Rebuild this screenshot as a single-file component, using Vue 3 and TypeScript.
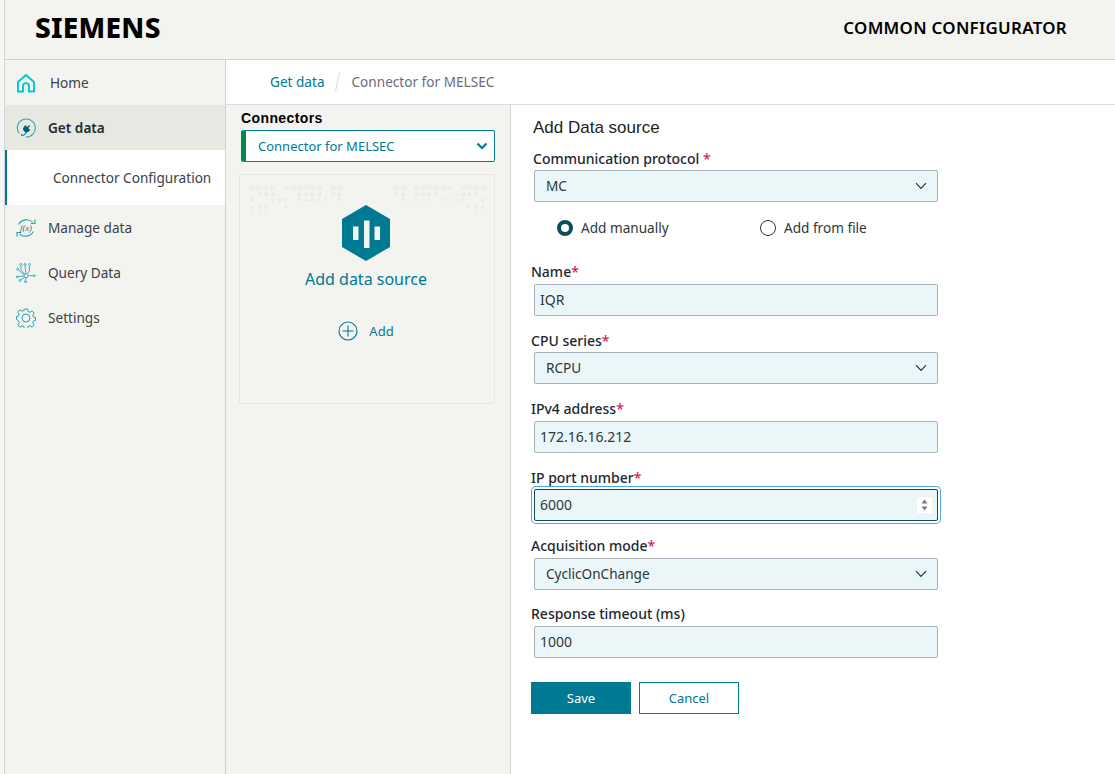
<script setup lang="ts">
const teal = '#007993'

const fields = [
  { label: 'Name', req: true, value: 'IQR', kind: 'input' },
  { label: 'CPU series', req: true, value: 'RCPU', kind: 'select' },
  { label: 'IPv4 address', req: true, value: '172.16.16.212', kind: 'input' },
  { label: 'IP port number', req: true, value: '6000', kind: 'number' },
  { label: 'Acquisition mode', req: true, value: 'CyclicOnChange', kind: 'select' },
  { label: 'Response timeout (ms)', req: false, value: '1000', kind: 'input' },
]

// faint circuit dots behind the card, [y, size, x positions]
const dotRows: Array<[number, number, number[]]> = [
  [12, 3, [12, 18, 25, 32, 46, 53, 59, 66, 72, 79, 93, 99, 156, 163, 176, 183, 189, 196, 203, 209, 223, 229, 236, 243]],
  [19, 2.5, [20, 26, 33, 59, 66, 72, 79, 93, 99, 156, 163, 176, 183, 189, 196, 223, 229, 236]],
  [25, 1.5, [12, 33, 40, 46, 59, 66, 72, 79, 86, 99, 163, 176, 189, 203, 216, 223, 243]],
  [32, 1.5, [12, 20, 26, 46, 229, 236, 243]],
  [39, 1, [12, 20, 26, 236, 243]],
]
</script>

<template>
  <div class="page">
    <div class="strip"></div>
    <div class="shell">
      <header class="topbar">
        <span class="logo">SIEMENS</span>
        <span class="app-name">COMMON CONFIGURATOR</span>
      </header>

      <div class="body">
        <nav class="sidebar">
          <div class="nav-item home">
            <svg class="nav-icon" viewBox="0 0 20 20" fill="none" stroke="#00c7d4" stroke-width="1.9">
              <path d="M2 9 10 2l8 7v9.500h-5v-5.400a3 3 0 0 0-6 0v5.400H2z" stroke-linejoin="miter" />
            </svg>
            <span>Home</span>
          </div>
          <div class="nav-item active">
            <svg class="nav-icon" viewBox="0 0 20 20" fill="none" stroke="#2fa6b8" stroke-width="1.1">
              <path d="M3.200 15.500A9 9 0 1 1 10 19" />
              <path d="M5 16.500c1.500 1.500 3 .8 4-.3l1.400-2.400" stroke="#00788f" />
              <path d="m9.200 7 2 2 2-2 1 1-2 2 2 2-1.800 1.800a3 3 0 0 1-4-.3l-.6-.6a3 3 0 0 1 0-4z" fill="#00607a" stroke="none" />
            </svg>
            <span>Get data</span>
          </div>
          <div class="nav-sub">Connector Configuration</div>
          <div class="nav-item">
            <svg class="nav-icon" viewBox="0 0 20 20" fill="none" stroke="#1ba3b8" stroke-width="1.1">
              <path d="M2.600 6.500A9 9 0 0 1 16.700 4.200" />
              <path d="M19 1.500v4h-4" />
              <path d="M17.400 13.500A9 9 0 0 1 3.300 15.800" />
              <path d="M1 18.500v-4h4" />
              <text x="10" y="12.800" text-anchor="middle" class="fx" fill="#1c6f80" stroke="none">f(x)</text>
            </svg>
            <span>Manage data</span>
          </div>
          <div class="nav-item">
            <svg class="nav-icon" viewBox="0 0 20 20" fill="none" stroke="#2aa9bb" stroke-width="0.9">
              <circle cx="10" cy="12.700" r="2" />
              <path d="M9.800 10.700 9 2.500M8.700 11.200 5 7V2.500M11.200 11 13.400 8V2.500M12 12.700h5.500M8 13l-6 .7M8.300 11.900 2.500 7M8.500 14.200 4.500 17M10 14.700l-.4 3.400" />
              <circle cx="9" cy="1.500" r="1" />
              <circle cx="4.800" cy="1.500" r="1" />
              <circle cx="13.500" cy="1.500" r="1" />
              <circle cx="18.300" cy="12.700" r="1" />
              <circle cx="1.300" cy="13.800" r="1" />
              <circle cx="1.700" cy="6.300" r="1" />
              <circle cx="3.800" cy="17.500" r="1" />
              <circle cx="9.500" cy="18.900" r="1" />
            </svg>
            <span>Query Data</span>
          </div>
          <div class="nav-item">
            <svg class="nav-icon" viewBox="0 0 20 20" fill="none" stroke="#1ba3b8" stroke-width="1">
              <circle cx="10" cy="10" r="4" />
              <path d="M8.300 1h3.400l.5 2.600 1.700.7 2.200-1.500 2.100 2.400-1.500 2.100.7 1.700 2.100.5v3l-2.100.5-.7 1.700 1.500 2.100-2.100 2.400-2.200-1.500-1.700.7-.5 2.600H8.300l-.5-2.600-1.700-.7-2.200 1.500-2.100-2.400 1.500-2.100-.7-1.700L.5 11.500v-3l2.100-.5.7-1.700-1.500-2.100 2.100-2.400 2.200 1.500 1.700-.7z" />
            </svg>
            <span>Settings</span>
          </div>
        </nav>

        <main class="content">
          <div class="crumbs">
            <span class="crumb-link">Get data</span>
            <span class="crumb-sep"></span>
            <span class="crumb-current">Connector for MELSEC</span>
          </div>

          <div class="columns">
            <section class="panel">
              <div class="panel-title">Connectors</div>
              <div class="connector-select">
                <span>Connector for MELSEC</span>
                <svg width="12" height="8" viewBox="0 0 12 8" fill="none" :stroke="teal" stroke-width="2.200">
                  <path d="M1.500 1.500 6 6l4.500-4.500" />
                </svg>
              </div>
              <div class="card">
                <svg class="card-dots" width="256" height="50" viewBox="0 0 256 50">
                  <g v-for="row in dotRows" :key="row[0]">
                    <rect
                      v-for="x in row[2]"
                      :key="x"
                      :x="x"
                      :y="row[0]"
                      :width="row[1]"
                      :height="row[1]"
                      fill="none"
                      stroke="#e7e7e3"
                      stroke-width="1"
                    />
                  </g>
                </svg>
                <svg class="hex" width="48" height="56" viewBox="0 0 48 56">
                  <path d="M24 0 48 14v28L24 56 0 42V14z" :fill="teal" />
                  <path d="M11 21.500h5.500v13.500H11zM22 15.500h5.500V43H22zM32.500 21.500H38V35h-5.500z" fill="#f3f3ef" />
                </svg>
                <div class="card-title">Add data source</div>
                <div class="card-add">
                  <svg width="20" height="20" viewBox="0 0 20 20" fill="none" :stroke="teal" stroke-width="1.100">
                    <circle cx="10" cy="10" r="9" />
                    <path d="M10 4.500v11M4.500 10h11" />
                  </svg>
                  <span>Add</span>
                </div>
              </div>
            </section>

            <section class="form">
              <div class="form-title">Add Data source</div>
              <div class="label proto-label">Communication protocol <em class="star">*</em></div>
              <div class="box">
                <span class="select-value">MC</span>
                <svg class="chev" width="12" height="8" viewBox="0 0 12 8" fill="none" stroke="#1e3a46" stroke-width="1.200">
                  <path d="M1 1.200 6 6.500l5-5.300" />
                </svg>
              </div>

              <div class="radios">
                <div class="radio first">
                  <span class="dot on"></span>
                  <span>Add manually</span>
                </div>
                <div class="radio">
                  <span class="dot"></span>
                  <span>Add from file</span>
                </div>
              </div>

              <div v-for="f in fields" :key="f.label" class="field">
                <div class="label">{{ f.label }}<em v-if="f.req" class="star">*</em></div>
                <div class="box" :class="{ focused: f.kind === 'number' }">
                  <span :class="f.kind === 'select' ? 'select-value' : 'input-value'">{{ f.value }}</span>
                  <svg v-if="f.kind === 'select'" class="chev" width="12" height="8" viewBox="0 0 12 8" fill="none" stroke="#1e3a46" stroke-width="1.200">
                    <path d="M1 1.200 6 6.500l5-5.300" />
                  </svg>
                  <span v-if="f.kind === 'number'" class="spin">
                    <svg width="7" height="14" viewBox="0 0 7 14" fill="#7a7a7a">
                      <path d="M3.500 1.500 6.500 5.500h-6zM.5 8.500h6l-3 4z" />
                    </svg>
                  </span>
                </div>
              </div>

              <div class="actions">
                <button class="btn primary">Save</button>
                <button class="btn">Cancel</button>
              </div>
            </section>
          </div>
        </main>
      </div>
    </div>
  </div>
</template>

<style>
html,
body {
  margin: 0;
  background: #fff;
  overflow: hidden;
}
</style>

<style scoped>
.page {
  display: flex;
  height: 100vh;
  font-family: 'Noto Sans', 'Open Sans', sans-serif;
  font-size: 13.6px;
  color: #2d373c;
}
.strip {
  width: 4px;
  background: #f6f6f6;
  border-right: 1px solid #d6d6d6;
  flex: none;
}
.shell {
  flex: 1;
  display: flex;
  flex-direction: column;
  min-width: 0;
}
.topbar {
  flex: none;
  display: flex;
  align-items: center;
  justify-content: space-between;
  padding: 0 48px 6px 30px;
  box-sizing: border-box;
  height: 60px;
  background: #f3f3ef;
  border-bottom: 1px solid #d2d2d2;
}
.logo {
  font-size: 28px;
  font-weight: 800;
  color: #000;
  line-height: 1;
  letter-spacing: 0.25px;
}
.app-name {
  margin-top: 2px;
  font-size: 16.9px;
  font-weight: 600;
  letter-spacing: 0.3px;
  color: #000;
}
.body {
  flex: 1;
  display: flex;
  min-height: 0;
}
.sidebar {
  width: 220px;
  flex: none;
  background: #f3f3ef;
  border-right: 1px solid #d2d2d2;
}
.nav-item {
  height: 45px;
  display: flex;
  align-items: center;
  gap: 12px;
  padding-left: 11px;
  color: #3a4246;
}
.nav-item.home {
  gap: 14px;
}
.nav-item.active {
  background: #e8e8e3;
  font-weight: 600;
  color: #1f2a30;
}
.nav-icon {
  width: 20px;
  height: 20px;
  flex: none;
}
.fx {
  font-size: 8.500px;
  font-style: italic;
  font-family: 'Liberation Serif', serif;
}
.nav-sub {
  height: 55px;
  box-sizing: border-box;
  display: flex;
  align-items: center;
  padding-left: 46px;
  background: #fff;
  border-left: 2px solid #007993;
  color: #3a4246;
}
.content {
  flex: 1;
  display: flex;
  flex-direction: column;
  min-width: 0;
}
.crumbs {
  height: 45px;
  flex: none;
  box-sizing: border-box;
  display: flex;
  align-items: center;
  padding: 0 0 1px 44px;
  border-bottom: 1px solid #dcdce0;
  background: #fff;
}
.crumb-link {
  color: #007993;
}
.crumb-sep {
  width: 1px;
  height: 20px;
  margin: 0 14px 0 12px;
  background: #dcdcdc;
  transform: rotate(12deg);
}
.crumb-current {
  color: #6e6b80;
}
.columns {
  flex: 1;
  display: flex;
  min-height: 0;
}
.panel {
  width: 285px;
  flex: none;
  box-sizing: border-box;
  padding: 5px 15px 0;
  background: #f3f3ef;
  border-right: 1px solid #d2d2d2;
}
.panel-title {
  height: 16px;
  line-height: 16px;
  margin-bottom: 4px;
  font-family: 'Liberation Sans', sans-serif;
  font-size: 14px;
  font-weight: 700;
  letter-spacing: 0.4px;
  color: #000;
}
.connector-select {
  width: 254px;
  height: 32px;
  box-sizing: border-box;
  display: flex;
  align-items: center;
  justify-content: space-between;
  padding: 0 6px 0 12px;
  background: #fff;
  border: 1px solid #007993;
  border-left: 5px solid #00894d;
  border-radius: 2px;
  font-size: 13px;
  color: #007993;
}
.card {
  position: relative;
  width: 256px;
  height: 230px;
  box-sizing: border-box;
  margin: 12px 0 0 -2px;
  padding: 30px 2px 0 0;
  display: flex;
  flex-direction: column;
  align-items: center;
  border: 1px solid #e6e6e3;
  border-radius: 2px;
}
.card-dots {
  position: absolute;
  left: -1px;
  top: -1px;
}
.hex {
  position: relative;
  flex: none;
}
.card-title {
  margin: 7px 0 0;
  font-size: 16px;
  line-height: 22px;
  color: #007993;
}
.card-add {
  margin-top: 31px;
  display: flex;
  align-items: center;
  gap: 11px;
  font-size: 13px;
  color: #007993;
}
.form {
  flex: 1;
  padding: 13px 0 0 20px;
  background: #fff;
}
.form-title {
  height: 20px;
  line-height: 20px;
  margin-left: 2px;
  font-family: 'Liberation Sans', sans-serif;
  font-size: 17px;
  color: #222;
}
.label {
  height: 16px;
  box-sizing: border-box;
  padding-top: 0.4px;
  line-height: 16px;
  margin-bottom: 4px;
  font-size: 14px;
  font-weight: 500;
  color: #1c2830;
}
.proto-label {
  margin: 13px 0 3px 2px;
}
.star {
  font-style: normal;
  color: #d81e50;
}
.box {
  position: relative;
  width: 404px;
  height: 32px;
  margin-left: 3px;
  padding-bottom: 0.8px;
  box-sizing: border-box;
  display: flex;
  align-items: center;
  background: #ebf6f9;
  border: 1px solid #a9b3bd;
  border-radius: 2px;
  color: #2d373c;
}
.box.focused {
  border-color: #0d4d5c;
  box-shadow: 0 0 0 2px #fff, 0 0 0 3px #4aa8e8;
}
.select-value {
  padding-left: 11px;
}
.input-value {
  padding-left: 5px;
  font-size: 14px;
}
.chev {
  position: absolute;
  right: 10px;
  top: 11px;
}
.spin {
  position: absolute;
  right: 5px;
  top: 7px;
  width: 15px;
  height: 16px;
  background: #fff;
  display: flex;
  align-items: center;
  justify-content: center;
}
.radios {
  height: 20px;
  margin: 16px 0 26px;
  display: flex;
  align-items: center;
}
.radio {
  display: flex;
  align-items: center;
  gap: 8px;
  color: #2d373c;
}
.radio span:last-child {
  margin-bottom: 1px;
}
.radio.first {
  margin-left: 26px;
  width: 203px;
}
.dot {
  width: 16px;
  height: 16px;
  box-sizing: border-box;
  border: 1.500px solid #1e3a46;
  border-radius: 50%;
  background: #fff;
}
.dot.on {
  border: 4.500px solid #0d4d5c;
}
.field {
  margin-bottom: 16.4px;
}
.actions {
  display: flex;
  gap: 8px;
  margin-top: 24.4px;
}
.btn {
  width: 100px;
  height: 32px;
  box-sizing: border-box;
  background: #fff;
  border: 1px solid #007993;
  font: inherit;
  font-size: 13px;
  color: #007993;
  padding: 0;
}
.btn.primary {
  background: #007993;
  color: #fff;
}
</style>
